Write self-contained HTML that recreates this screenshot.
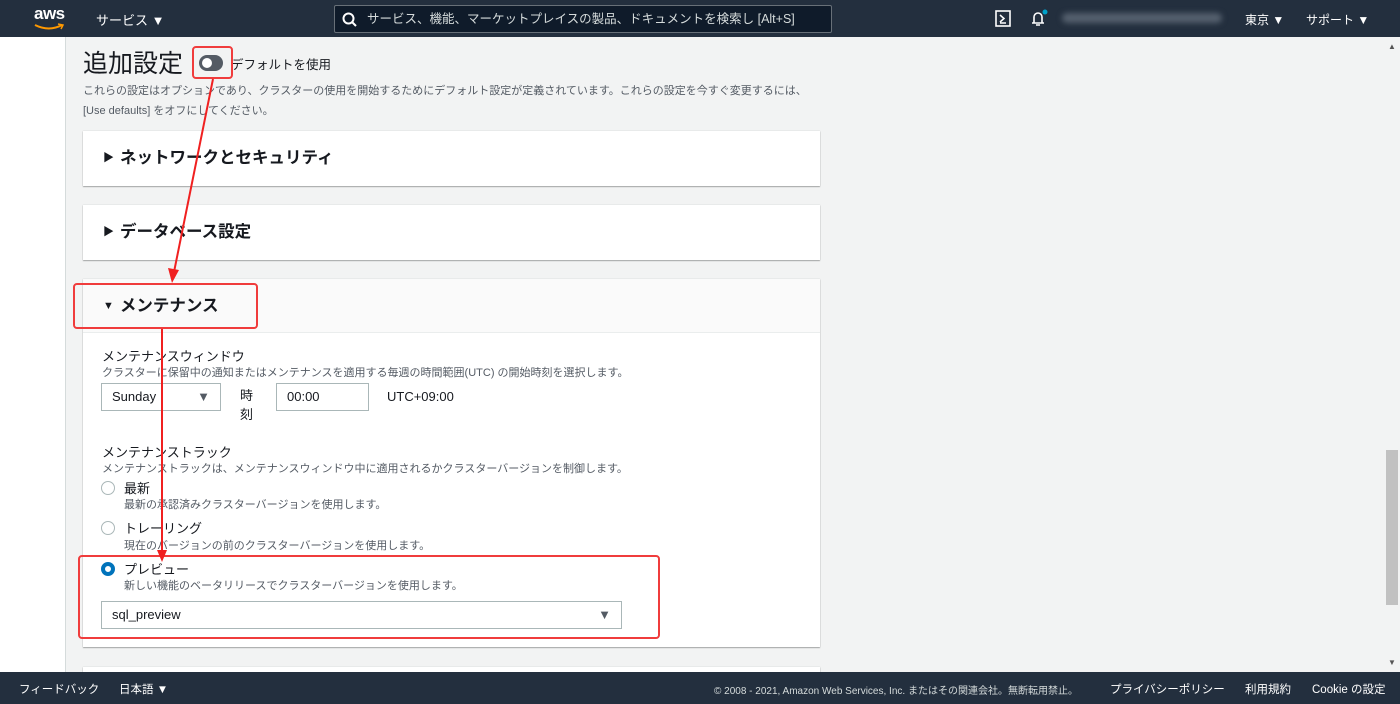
<!DOCTYPE html>
<html><head><meta charset="utf-8"><style>
*{box-sizing:border-box;margin:0;padding:0}
body{width:1400px;height:704px;overflow:hidden;position:relative;background:#f2f3f3;font-family:"Liberation Sans","Noto Sans CJK JP",sans-serif;color:#16191f}
.abs{position:absolute;white-space:nowrap}
#hdr{left:0;top:0;width:1400px;height:37px;background:#232f3e;color:#fff;font-size:13px}
#ftr{left:0;top:672px;width:1400px;height:32px;background:#232f3e;color:#fff;font-size:11.5px}
.card{position:absolute;left:83px;width:737px;background:#fff;box-shadow:0 1px 1px rgba(0,0,0,.3),0 0 1px rgba(0,0,0,.2)}
.ch{font-size:16.5px;font-weight:bold;padding-left:20px;line-height:54px;white-space:nowrap}
.ch span{font-size:11px;margin-right:6px;vertical-align:2px}
.small{font-size:11px;color:#545b64}
.lbl{font-size:13px}
.radio{position:absolute;width:14px;height:14px;border:1px solid #aab7b8;border-radius:50%;background:#fff}
.red{position:absolute;border:2px solid #f03c3c;border-radius:4px}
</style></head><body>
<div class="abs" style="left:0;top:37px;width:66px;height:635px;background:#fff;border-right:1px solid #d5dbdb"></div>
<div id="hdr" class="abs">
 <div class="abs" style="left:34px;top:4px;font-size:17px;font-weight:bold;letter-spacing:-0.5px">aws</div>
 <svg class="abs" style="left:33px;top:23px" width="32" height="8"><path d="M2 2 Q16 9 29 2" stroke="#f90" stroke-width="2" fill="none"/><path d="M25 1 L30 2 L28 6" stroke="#f90" stroke-width="1.5" fill="none"/></svg>
 <div class="abs" style="left:96px;top:10px">サービス ▼</div>
 <div class="abs" style="left:334px;top:5px;width:498px;height:28px;border:1px solid #687078;border-radius:2px;background:#0f1b2a;color:#d5dbdb;font-size:12.5px;line-height:26px;padding-left:32px;overflow:hidden">サービス、機能、マーケットプレイスの製品、ドキュメントを検索し [Alt+S]</div>
 <svg class="abs" style="left:342px;top:12px" width="16" height="16"><circle cx="6.5" cy="6.5" r="5" stroke="#fff" stroke-width="2" fill="none"/><path d="M10 10 L14 14" stroke="#fff" stroke-width="2"/></svg>
 <svg class="abs" style="left:995px;top:10px" width="16" height="17"><rect x="1" y="1" width="14" height="15" stroke="#fff" stroke-width="1.6" fill="none"/><path d="M5 5 L9 8.5 L5 12 M5 13h6" stroke="#fff" stroke-width="1.5" fill="none"/></svg>
 <svg class="abs" style="left:1028px;top:8px" width="20" height="20"><path d="M4 15 h12 M6 15 V9 a4 4 0 0 1 8 0 V15 M8 17 h4" stroke="#fff" stroke-width="1.6" fill="none"/><circle cx="17" cy="4" r="2.5" fill="#00a1c9"/></svg>
 <div class="abs" style="left:1062px;top:13px;width:160px;height:10px;background:#55606e;border-radius:5px;filter:blur(3px)"></div>
 <div class="abs" style="left:1245px;top:11px;font-size:12px">東京 ▼</div>
 <div class="abs" style="left:1306px;top:11px;font-size:12px">サポート ▼</div>
</div>
<div class="abs" style="left:83px;top:44px;font-size:25px">追加設定</div>
<div class="abs" style="left:199px;top:55px;width:24px;height:16px;border-radius:8px;background:#545b64"><div style="position:absolute;left:3px;top:3px;width:10px;height:10px;border-radius:50%;background:#fff"></div></div>
<div class="abs" style="left:231px;top:54px;font-size:12.5px">デフォルトを使用</div>
<div class="abs small" style="left:83px;top:81px;line-height:20px">これらの設定はオプションであり、クラスターの使用を開始するためにデフォルト設定が定義されています。これらの設定を今すぐ変更するには、<br>[Use defaults] をオフにしてください。</div>
<div class="card" style="top:131px;height:55px"><div class="ch"><span>▶</span>ネットワークとセキュリティ</div></div>
<div class="card" style="top:205px;height:55px"><div class="ch"><span>▶</span>データベース設定</div></div>
<div class="card" style="top:279px;height:368px">
 <div class="ch" style="background:#fafafa;border-bottom:1px solid #eaeded;height:54px"><span>▼</span>メンテナンス</div>
</div>
<div class="card" style="top:667px;height:20px"></div>
<div class="abs lbl" style="left:102px;top:346px">メンテナンスウィンドウ</div>
<div class="abs small" style="left:102px;top:364px">クラスターに保留中の通知またはメンテナンスを適用する毎週の時間範囲(UTC) の開始時刻を選択します。</div>
<div class="abs" style="left:101px;top:383px;width:120px;height:28px;border:1px solid #aab7b8;font-size:13px;line-height:26px;padding-left:10px">Sunday<span style="position:absolute;right:10px;color:#545b64">▼</span></div>
<div class="abs" style="left:240px;top:386px;font-size:13px;line-height:19px">時<br>刻</div>
<div class="abs" style="left:276px;top:383px;width:93px;height:28px;border:1px solid #aab7b8;font-size:13px;line-height:26px;padding-left:10px">00:00</div>
<div class="abs" style="left:387px;top:389px;font-size:13px">UTC+09:00</div>
<div class="abs lbl" style="left:102px;top:442px">メンテナンストラック</div>
<div class="abs small" style="left:102px;top:460px">メンテナンストラックは、メンテナンスウィンドウ中に適用されるかクラスターバージョンを制御します。</div>
<div class="radio" style="left:101px;top:481px"></div>
<div class="abs lbl" style="left:124px;top:478px">最新</div>
<div class="abs small" style="left:124px;top:496px">最新の承認済みクラスターバージョンを使用します。</div>
<div class="radio" style="left:101px;top:521px"></div>
<div class="abs lbl" style="left:124px;top:518px">トレーリング</div>
<div class="abs small" style="left:124px;top:537px">現在のバージョンの前のクラスターバージョンを使用します。</div>
<div class="radio" style="left:101px;top:562px;border:4px solid #0073bb"></div>
<div class="abs lbl" style="left:124px;top:559px">プレビュー</div>
<div class="abs small" style="left:124px;top:577px">新しい機能のベータリリースでクラスターバージョンを使用します。</div>
<div class="abs" style="left:101px;top:601px;width:521px;height:28px;border:1px solid #aab7b8;background:#fff;font-size:13px;line-height:26px;padding-left:10px">sql_preview<span style="position:absolute;right:10px;color:#545b64">▼</span></div>
<div class="red" style="left:192px;top:46px;width:41px;height:33px"></div>
<div class="red" style="left:73px;top:283px;width:185px;height:46px"></div>
<div class="red" style="left:78px;top:555px;width:582px;height:84px"></div>
<svg class="abs" style="left:0;top:0" width="1400" height="704">
<path d="M213 79 L174 272" stroke="#f02020" stroke-width="2"/><path d="M168 268 L172 283 L179 270 Z" fill="#f02020"/>
<path d="M162 329 L162 552" stroke="#f02020" stroke-width="2"/><path d="M157 550 L162 562 L167 550 Z" fill="#f02020"/>
</svg>
<div class="abs" style="left:1386px;top:450px;width:12px;height:155px;background:#c1c1c1"></div>
<div class="abs" style="left:1388px;top:42px;font-size:8px;color:#555">▲</div>
<div class="abs" style="left:1388px;top:658px;font-size:8px;color:#555">▼</div>
<div id="ftr" class="abs">
 <div class="abs" style="left:19px;top:9px">フィードバック</div>
 <div class="abs" style="left:119px;top:9px">日本語 ▼</div>
 <div class="abs" style="left:714px;top:10px;font-size:10px;color:#d5dbdb">© 2008 - 2021, Amazon Web Services, Inc. またはその関連会社。無断転用禁止。</div>
 <div class="abs" style="left:1110px;top:9px">プライバシーポリシー</div>
 <div class="abs" style="left:1245px;top:9px">利用規約</div>
 <div class="abs" style="left:1312px;top:9px">Cookie の設定</div>
</div>
</body></html>
